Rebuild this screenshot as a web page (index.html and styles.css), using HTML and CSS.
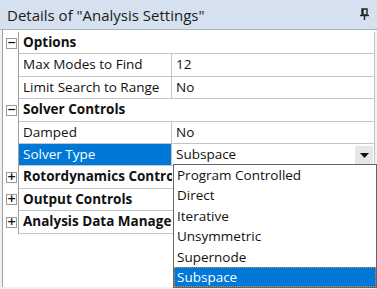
FILE: index.html
```html
<!DOCTYPE html>
<html lang="en">
<head>
  <meta charset="UTF-8"/>
  <title>Details of "Analysis Settings"</title>
  <link rel="stylesheet" href="styles.css">
</head>
<body>

<div class="panel">
  <div class="titlebar">
    <span class="title">Details of "Analysis Settings"</span>
    <svg class="pin" width="9" height="12" viewBox="0 0 9 12">
      <path d="M2 1h5v6H2z M3 1v5" fill="none" stroke="#222" stroke-width="1.4"/>
      <path d="M0 7.5h9" stroke="#222" stroke-width="1.4"/>
      <path d="M4.5 8v4" stroke="#222" stroke-width="1.4"/>
    </svg>
  </div>

  <div class="tree">
    <div class="row group">
      <div class="exp"><span class="box">&minus;</span></div>
      <div class="name"><span class="label">Options</span></div>
    </div>
    <div class="row">
      <div class="exp"></div>
      <div class="name">Max Modes to Find</div>
      <div class="value">12</div>
    </div>
    <div class="row">
      <div class="exp"></div>
      <div class="name">Limit Search to Range</div>
      <div class="value">No</div>
    </div>
    <div class="row group">
      <div class="exp"><span class="box">&minus;</span></div>
      <div class="name"><span class="label">Solver Controls</span></div>
    </div>
    <div class="row">
      <div class="exp"></div>
      <div class="name">Damped</div>
      <div class="value">No</div>
    </div>
    <div class="row">
      <div class="exp"></div>
      <div class="name selected">Solver Type</div>
      <div class="value combo">
        <span>Subspace</span>
        <span class="drop"><svg width="9" height="5" viewBox="0 0 9 5"><path d="M0 0h9L4.5 5z" fill="#111"/></svg></span>
      </div>
    </div>
    <div class="row group">
      <div class="exp"><span class="box">+</span></div>
      <div class="name"><span class="label">Rotordynamics Controls</span></div>
    </div>
    <div class="row group">
      <div class="exp"><span class="box">+</span></div>
      <div class="name"><span class="label">Output Controls</span></div>
    </div>
    <div class="row group">
      <div class="exp"><span class="box">+</span></div>
      <div class="name"><span class="label">Analysis Data Management</span></div>
    </div>

    <ul class="popup">
      <li>Program Controlled</li>
      <li>Direct</li>
      <li>Iterative</li>
      <li>Unsymmetric</li>
      <li>Supernode</li>
      <li class="current">Subspace</li>
    </ul>
  </div>
</div>

</body>
</html>
```

FILE: styles.css
```css
body {
  margin: 0;
  font-family: "Open Sans", "Noto Sans", sans-serif;
  color: #111;
  background: #f0f0f0;
}
.panel {
  width: 377px;
  height: 289px;
  overflow: hidden;
  display: flex;
  flex-direction: column;
}
.titlebar {
  height: 30px;
  background: #d5e1ef;
  border-bottom: 1px solid #a9b4c0;
  display: flex;
  align-items: center;
  justify-content: space-between;
  padding: 0 8px 0 7px;
  box-sizing: border-box;
}
.title {
  font-size: 15px;
  color: #1c1c1c;
}
.pin {
  margin-bottom: 2px;
}
.tree {
  position: relative;
  flex: 1;
  background: #fff;
  margin: 0 2px 2px 2px;
  border-left: 1px solid #a0a0a0;
  padding-top: 2px;
}
.row {
  display: grid;
  grid-template-columns: 16px 153px 1fr;
  height: 22.4px;
  font-size: 13.5px;
  line-height: 21px;
}
.exp {
  display: flex;
  align-items: center;
  padding-left: 3px;
  border-right: 1px solid #a0a0a0;
}
.box {
  width: 9px;
  height: 9px;
  border: 1px solid #9a9a9a;
  font-size: 11px;
  line-height: 8px;
  text-align: center;
  font-weight: bold;
  font-family: "DejaVu Sans", sans-serif;
}
.name, .value {
  border-bottom: 1px solid #c4c4c4;
  padding-left: 4px;
  white-space: nowrap;
  overflow: hidden;
}
.name, .value {
  border-right: 1px solid #c4c4c4;
}
.group .name {
  grid-column: 2 / 4;
  font-weight: bold;
}
.label {
  display: block;
  max-width: 149px;
  overflow: hidden;
}
.selected {
  background: #0078d7;
  color: #fff;
}
.combo {
  display: flex;
  justify-content: space-between;
  align-items: stretch;
  padding-right: 1px;
}
.drop {
  width: 18px;
  background: #e6e6e6;
  display: flex;
  align-items: center;
  justify-content: center;
  margin: 2px 0 1px;
}
.popup {
  position: absolute;
  left: 170px;
  top: 134px;
  width: 202px;
  margin: 0;
  padding: 0;
  list-style: none;
  background: #fff;
  border: 1px solid #646464;
  font-size: 13.5px;
}
.popup li {
  height: 20.4px;
  line-height: 21px;
  padding-left: 3px;
  white-space: nowrap;
}
.popup .current {
  background: #0078d7;
  color: #fff;
  outline: 1px dotted #e08a3c;
  outline-offset: -1px;
}
```
